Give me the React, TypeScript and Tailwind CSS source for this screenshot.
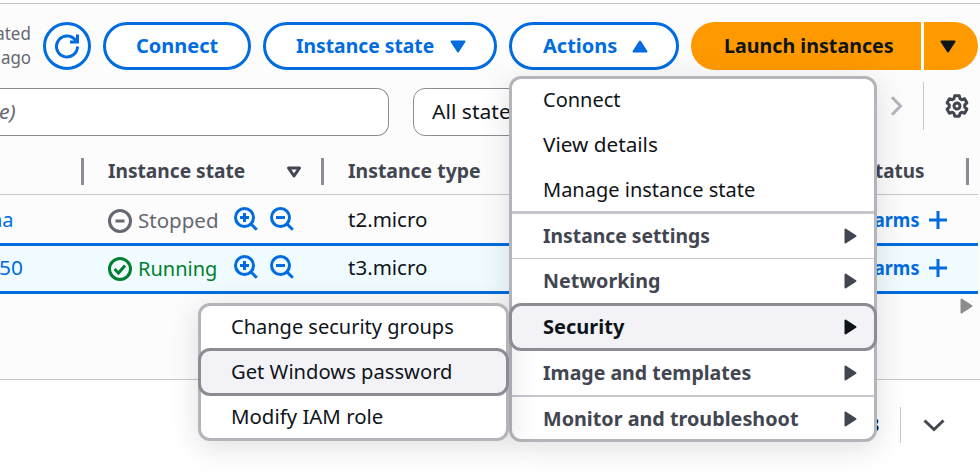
import { useLayoutEffect, useRef, useState } from 'react';
import type { ReactNode } from 'react';

/** Single-line label condensed (or stretched) to an exact advance width. */
function Label({ w, children, className = '' }: { w: number; children: string; className?: string }) {
  const ref = useRef<HTMLSpanElement>(null);
  const [scale, setScale] = useState(1);
  useLayoutEffect(() => {
    if (ref.current && ref.current.offsetWidth) setScale(w / ref.current.offsetWidth);
  }, [w]);
  return (
    <span className={`block h-6 shrink-0 whitespace-nowrap text-[20px] leading-6 ${className}`} style={{ width: w }}>
      <span ref={ref} className="inline-block origin-left" style={{ transform: `scaleX(${scale})` }}>
        {children}
      </span>
    </span>
  );
}

function Caret({ up = false }: { up?: boolean }) {
  return (
    <svg width="16" height="13" viewBox="0 0 16 13" className={`shrink-0 ${up ? 'rotate-180' : ''}`}>
      <path d="M1.5 1.5h13L8 11.5z" fill="currentColor" stroke="currentColor" strokeWidth="2" strokeLinejoin="round" />
    </svg>
  );
}

function CaretRight({ className = '' }: { className?: string }) {
  return (
    <svg width="13" height="16" viewBox="0 0 13 16" className={`shrink-0 ${className}`}>
      <path d="M1.5 1.5v13L11.5 8z" fill="currentColor" stroke="currentColor" strokeWidth="2" strokeLinejoin="round" />
    </svg>
  );
}

function Magnifier({ plus = false }: { plus?: boolean }) {
  return (
    <svg width="24" height="24" viewBox="0 0 24 24" fill="none" stroke="#006ce0" strokeWidth="3" className="shrink-0">
      <circle cx="10.5" cy="10.5" r="9" />
      <path d="M16.8 16.8l6 6M6 10.5h9" />
      {plus && <path d="M10.5 6v9" />}
    </svg>
  );
}

function PillButton({ className, children }: { className: string; children: ReactNode }) {
  return (
    <button className={`flex h-12 shrink-0 items-center rounded-full border-3 border-[#006ce0] bg-white font-bold text-[#006ce0] ${className}`}>
      {children}
    </button>
  );
}

function Toolbar() {
  return (
    <div className="flex h-[66px] items-start pt-[18px]">
      <div className="flex w-[31px] shrink-0 flex-col items-end overflow-hidden text-[18px] leading-6 text-[#656871]">
        <span className="-mt-px origin-right scale-x-[0.94]">ated</span>
        <span className="origin-right scale-x-[0.94]">ago</span>
      </div>
      <button className="ml-3 flex size-12 shrink-0 items-center justify-center rounded-full border-3 border-[#006ce0] bg-white">
        <svg width="24" height="25" viewBox="0 0 24 25" fill="none" stroke="#006ce0" strokeWidth="3">
          <path d="M22.5 12.5a10.5 10.5 0 1 1-1.6-5.6" />
          <path d="M15 8h7.5V.5" />
        </svg>
      </button>
      <PillButton className="ml-3 w-[148px] pl-[30px]">
        <Label w={82}>Connect</Label>
      </PillButton>
      <PillButton className="ml-3 w-[234px] pl-[30px]">
        <Label w={138}>Instance state</Label>
        <span className="ml-4"><Caret /></span>
      </PillButton>
      <PillButton className="ml-3 w-[170px] pl-[31px]">
        <Label w={74}>Actions</Label>
        <span className="ml-[15px]"><Caret up /></span>
      </PillButton>
      <button className="ml-3 flex h-12 w-[230px] shrink-0 items-center rounded-l-full bg-[#ff9900] pl-[33px] font-bold text-[#0f141a]">
        <Label w={170}>Launch instances</Label>
      </button>
      <button className="ml-[3px] flex h-12 w-[54px] shrink-0 items-center rounded-r-full bg-[#ff9900] pl-4 text-[#0f141a] shadow-[-3px_0_0_white]">
        <Caret />
      </button>
    </div>
  );
}

function FilterBar() {
  return (
    <div className="mt-[18px] flex h-12">
      <div className="flex w-[389px] shrink-0 items-center rounded-r-xl border border-l-0 border-[#8c8c94] bg-white italic text-[#656871]">
        <Label w={17} className="-ml-px">e)</Label>
      </div>
      <div className="ml-6 flex w-[300px] shrink-0 items-center rounded-xl border border-[#8c8c94] bg-white pl-[18px] text-[#0f141a]">
        <Label w={79}>All state</Label>
      </div>
      <svg width="14" height="22" viewBox="0 0 14 22" fill="none" stroke="#b4b4bb" strokeWidth="3" className="mt-[7px] ml-[177px] shrink-0">
        <path d="M2 2.2l8.5 8.8L2 19.8" />
      </svg>
      <div className="-mt-1.5 ml-[19px] h-12 w-px shrink-0 bg-[#c6c6cd]" />
      <svg width="24" height="24" viewBox="0 0 24 24" fill="none" stroke="#424650" strokeWidth="3" strokeLinejoin="round" className="mt-1.5 ml-[21px] shrink-0">
        <path d="M9.7 1.8h4.6l.8 3 1.5.9 3-.9 2.3 4-2.2 2.1v2.2l2.2 2.1-2.3 4-3-.9-1.5.9-.8 3H9.7l-.8-3-1.5-.9-3 .9-2.3-4 2.2-2.1v-2.2L2.1 8.800l2.300-4 3 .9 1.500-.9z" />
        <circle cx="12" cy="12" r="3" />
      </svg>
    </div>
  );
}

function ColumnBar({ className = '' }: { className?: string }) {
  return <div className={`h-[27px] w-[3px] shrink-0 bg-[#8c8c94] ${className}`} />;
}

function TableHead() {
  return (
    <div className="mr-0.5 flex h-[59px] items-center border-b border-[#c6c6cd] pt-[13px] font-bold text-[#424650]">
      <ColumnBar className="ml-[81px]" />
      <Label w={137} className="mb-0.5 ml-6">Instance state</Label>
      <svg width="16" height="14" viewBox="0 0 16 14" fill="none" stroke="#424650" strokeWidth="3" strokeLinejoin="round" className="ml-[41px] shrink-0">
        <path d="M2.5 3h11L8 11z" />
      </svg>
      <ColumnBar className="ml-[19px]" />
      <Label w={133} className="mb-0.5 ml-6">Instance type</Label>
      <Label w={49} className="mb-0.5 ml-[394px]">tatus</Label>
      <ColumnBar className="ml-[42px]" />
    </div>
  );
}

function InstanceRow({ id, idWidth, type, running = false }: { id: string; idWidth: number; type: string; running?: boolean }) {
  return (
    <div className={`mr-0.5 flex items-center border-b-3 border-[#006ce0] ${running ? 'h-12 bg-[#f0fbff] pb-[3px]' : 'h-[51px]'}`}>
      <div className="flex w-[108px] shrink-0 pt-px text-[#006ce0]">
        <Label w={idWidth} className={running ? '-ml-px' : '-ml-2.5'}>{id}</Label>
      </div>
      <svg width="24" height="24" viewBox="0 0 24 24" fill="none" stroke={running ? '#00802f' : '#656871'} strokeWidth="3" className="mt-1 shrink-0">
        <circle cx="12" cy="12" r="10.5" />
        <path d={running ? 'M6.5 12l4 4 6.5-7.500' : 'M7.500 12h9'} />
      </svg>
      <Label w={running ? 79 : 80} className={`mt-[3px] ml-1.5 ${running ? 'text-[#00802f]' : 'text-[#656871]'}`}>
        {running ? 'Running' : 'Stopped'}
      </Label>
      <div className={`flex gap-3 ${running ? 'ml-[17px]' : 'ml-4'}`}>
        <Magnifier plus />
        <Magnifier />
      </div>
      <Label w={79} className="mt-px ml-[54px] text-[#0f141a]">{type}</Label>
      <Label w={45} className="mt-px ml-[447px] font-bold text-[#006ce0]">arms</Label>
      <svg width="18" height="18" viewBox="0 0 18 18" stroke="#006ce0" strokeWidth="3" className="mt-0.5 ml-2.5 shrink-0">
        <path d="M0 9h18M9 0v18" />
      </svg>
    </div>
  );
}

function SplitPanelHeader() {
  return (
    <div className="flex h-[95px] items-start bg-white pt-[27px]">
      <Label w={12} className="mt-1.5 ml-[867px] font-bold text-[#0f141a]">3</Label>
      <div className="ml-[21px] h-9 w-px shrink-0 bg-[#c6c6cd]" />
      <svg width="22" height="14" viewBox="0 0 22 14" fill="none" stroke="#424650" strokeWidth="3" className="mt-[12px] ml-[22px] shrink-0">
        <path d="M1.5 1.5L11 10.5l9.5-9" />
      </svg>
    </div>
  );
}

const groups = [
  { name: 'Instance settings', w: 167, row: 'h-11' },
  { name: 'Networking', w: 117, row: 'h-[45px] border-t border-[#c6c6cd]' },
  { name: 'Security', w: 81, row: 'z-10 -mx-[3px] h-12 rounded-xl border-3 border-[#8c8c94] bg-[#f3f3f7] text-[#0f141a]' },
  { name: 'Image and templates', w: 208, row: 'h-11' },
  { name: 'Monitor and troubleshoot', w: 255, row: 'h-[46px] border-t-2 border-[#c6c6cd]' },
];

function ActionsMenu() {
  return (
    <div className="absolute top-[76px] left-[509px] flex h-[366px] w-[368px] flex-col rounded-xl border-3 border-[#b4b4bb] bg-white text-[#0f141a] shadow-[0_6px_30px_1px_rgba(0,7,22,0.12)]">
      <div className="h-[135px] shrink-0 border-b-3 border-[#c6c6cd]">
        <div className="-mt-0.5 flex h-[45px] items-center pl-[31px]"><Label w={78}>Connect</Label></div>
        <div className="flex h-[45px] items-center pl-[31px]"><Label w={115}>View details</Label></div>
        <div className="flex h-[45px] items-center pl-[31px]"><Label w={212}>Manage instance state</Label></div>
      </div>
      <div className="flex flex-col font-bold text-[#424650]">
        {groups.map((g) => (
          <div key={g.name} className={`flex shrink-0 items-center pr-[17px] pl-[31px] ${g.row}`}>
            <Label w={g.w}>{g.name}</Label>
            <CaretRight className="ml-auto" />
          </div>
        ))}
      </div>
    </div>
  );
}

function SecurityMenu() {
  return (
    <div className="absolute top-[303px] left-[198px] flex h-[138px] w-[311px] flex-col rounded-xl border-3 border-[#b4b4bb] bg-white text-[#0f141a] shadow-[0_6px_30px_1px_rgba(0,7,22,0.12)]">
      <div className="flex h-[42px] items-center pl-[30px]"><Label w={223}>Change security groups</Label></div>
      <div className="-mx-[3px] flex h-12 items-center rounded-xl border-3 border-[#8c8c94] bg-[#f3f3f7] pl-[30px]">
        <Label w={222}>Get Windows password</Label>
      </div>
      <div className="flex h-[42px] items-center pl-[30px]"><Label w={152}>Modify IAM role</Label></div>
    </div>
  );
}

export default function App() {
  return (
    <div className="relative h-[475px] w-[980px] overflow-hidden bg-white font-['Noto_Sans','Open_Sans',sans-serif]">
      <div className="mt-[3px] h-[377px] border-y border-[#c6c6cd] bg-[#fcfcfd]">
        <Toolbar />
        <FilterBar />
        <TableHead />
        <InstanceRow id="na" idWidth={24} type="t2.micro" />
        <InstanceRow id="50" idWidth={24} type="t3.micro" running />
        <div className="flex justify-end pt-1 pr-[7px] text-[#8c8c8c]"><CaretRight /></div>
      </div>
      <SplitPanelHeader />
      <ActionsMenu />
      <SecurityMenu />
    </div>
  );
}
